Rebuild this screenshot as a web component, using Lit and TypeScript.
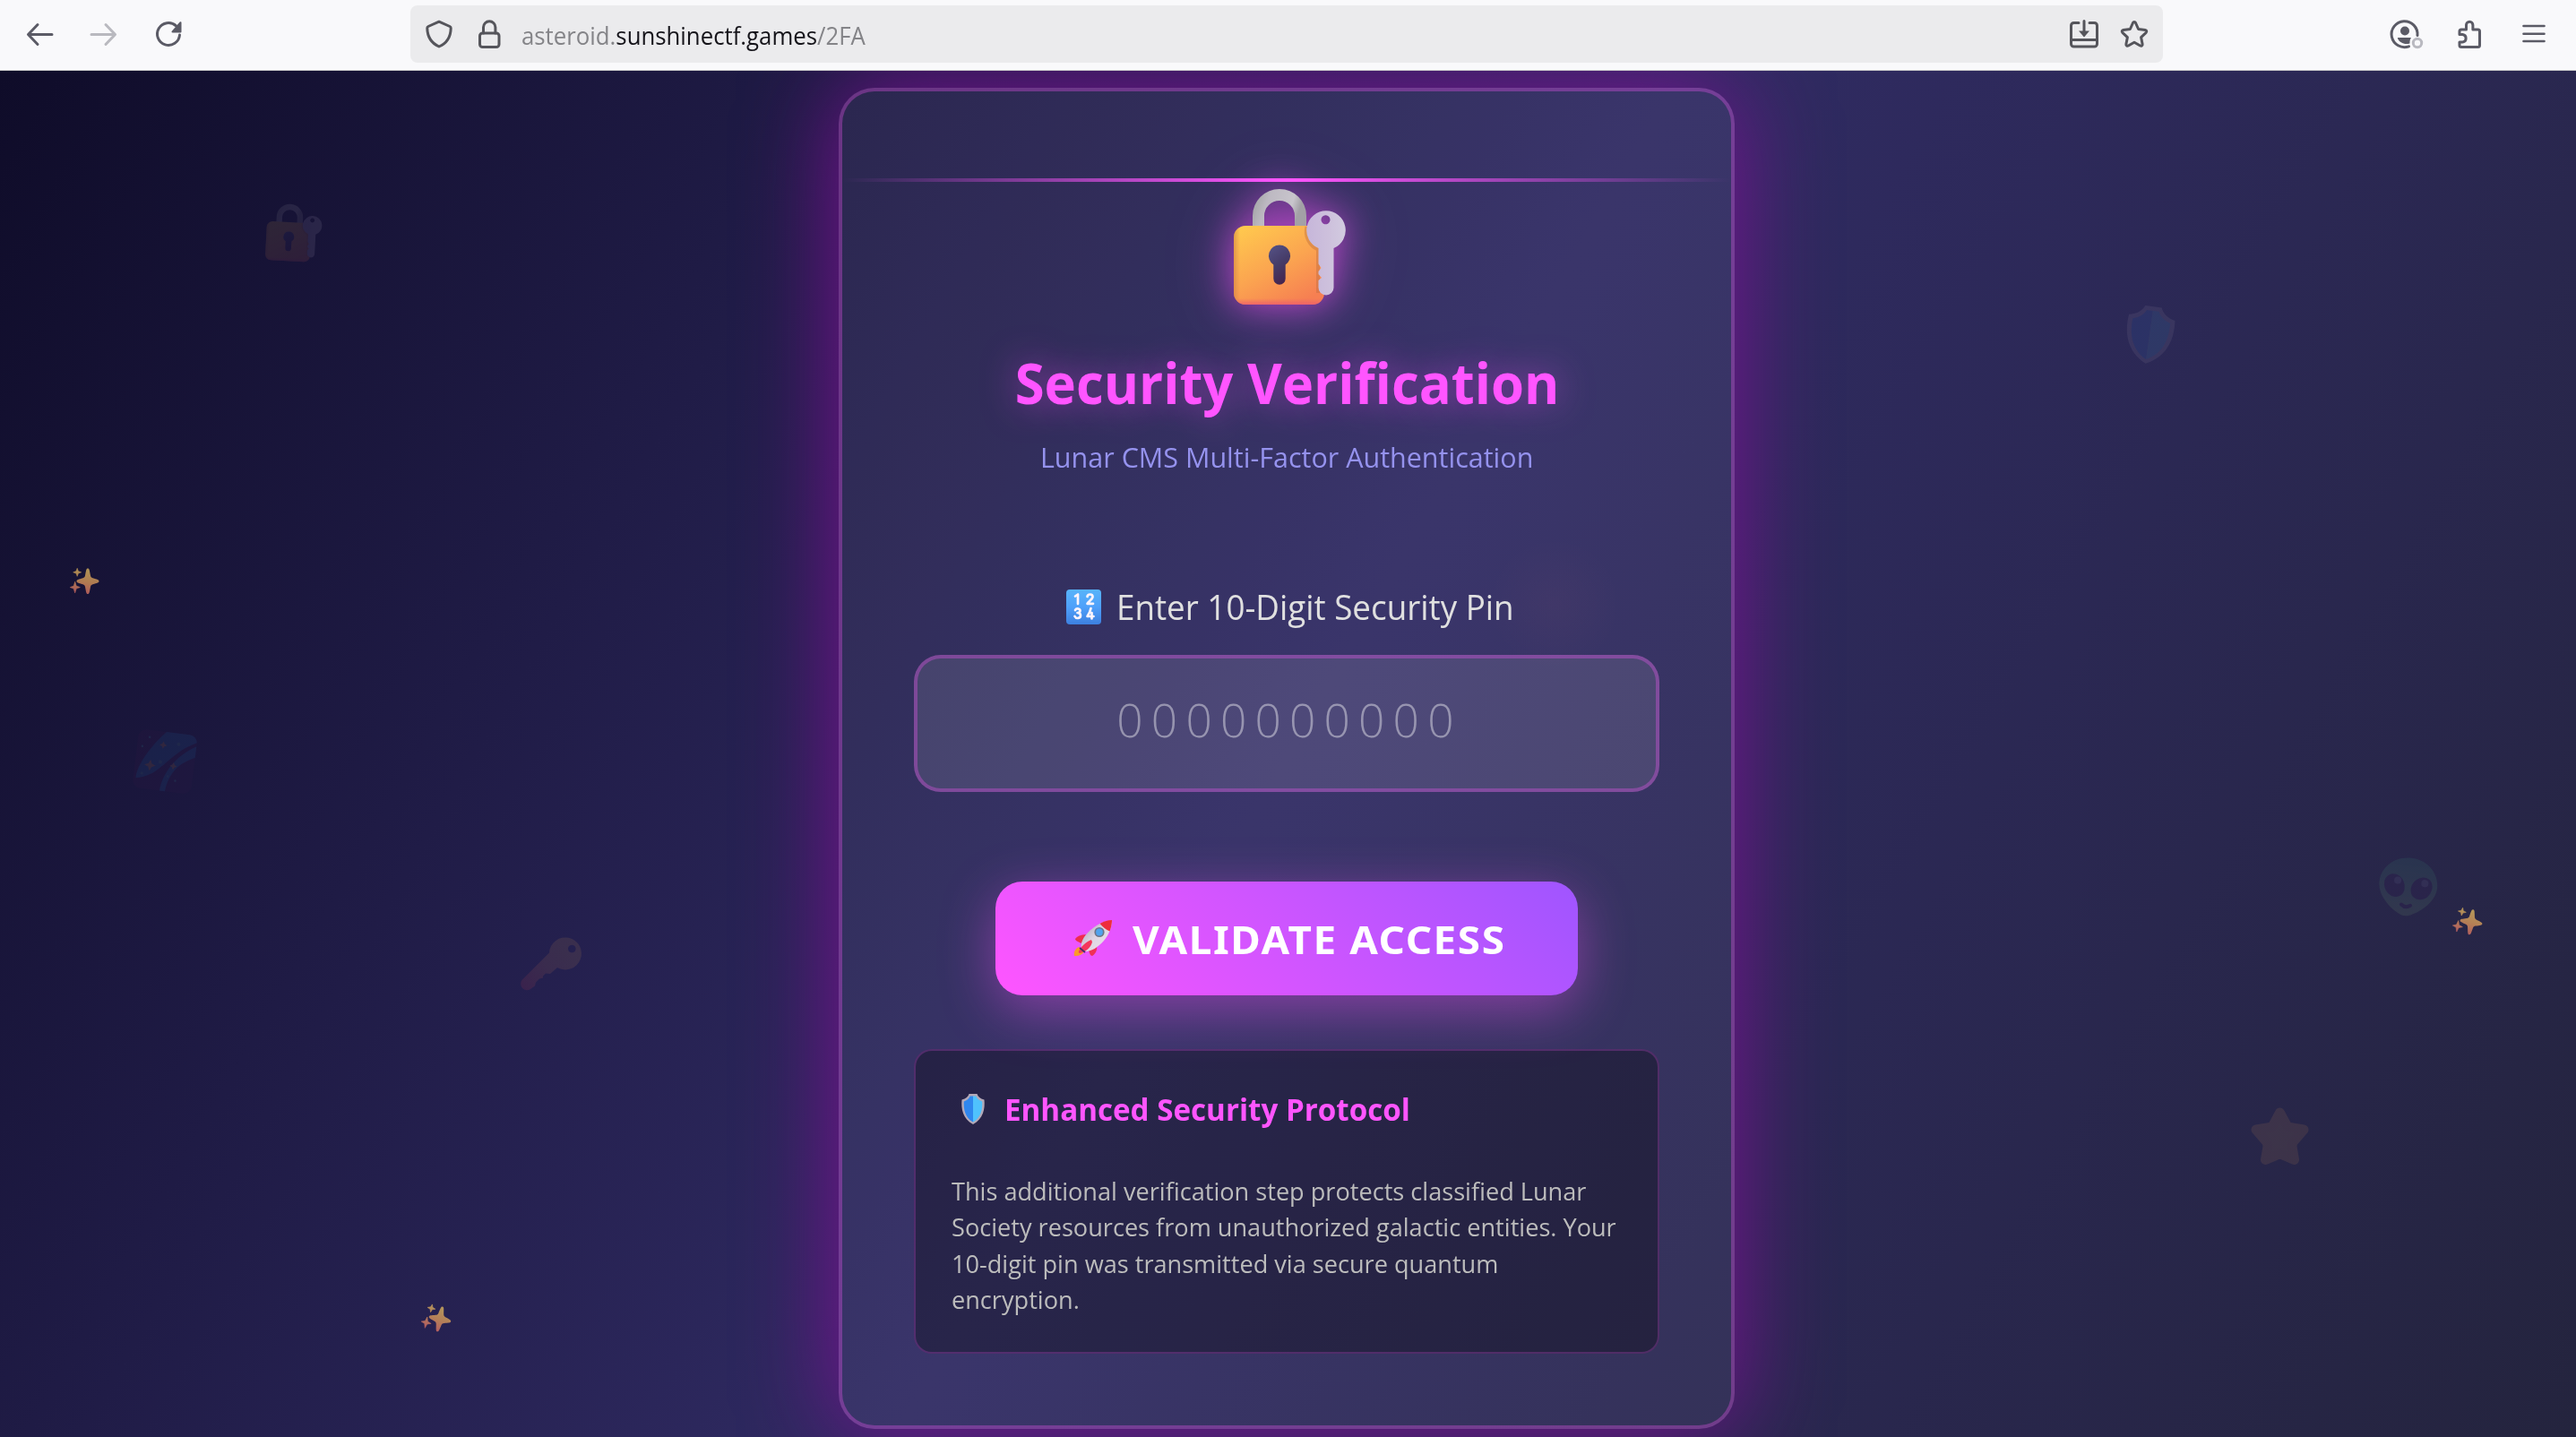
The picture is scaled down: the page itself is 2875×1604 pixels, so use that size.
import { LitElement, html, svg, css } from "lit";
import { customElement } from "lit/decorators.js";

const BODY_FONT = css`"Open Sans", "Noto Sans", "Liberation Sans", sans-serif`;

const lockWithKey = () => svg`
  <defs>
    <linearGradient id="lk-body" x1="0.1" y1="0" x2="0.7" y2="1">
      <stop offset="0" stop-color="#ffc94e" /><stop offset="0.55" stop-color="#fba450" /><stop offset="1" stop-color="#f67f52" />
    </linearGradient>
    <linearGradient id="lk-foot" x1="0" y1="0" x2="0" y2="1">
      <stop offset="0.92" stop-color="#f0606a" stop-opacity="0" /><stop offset="1" stop-color="#ea5a70" stop-opacity="0.8" />
    </linearGradient>
    <linearGradient id="lk-side" x1="0" y1="0" x2="1" y2="0">
      <stop offset="0" stop-color="#d08045" stop-opacity="0.6" /><stop offset="0.07" stop-color="#d08045" stop-opacity="0" />
    </linearGradient>
    <linearGradient id="lk-ring" x1="0" y1="0" x2="1" y2="0.3">
      <stop offset="0" stop-color="#a9a9ac" /><stop offset="0.25" stop-color="#bdb9c2" /><stop offset="0.8" stop-color="#c8c5cc" /><stop offset="1" stop-color="#a3a1a6" />
    </linearGradient>
    <linearGradient id="lk-hole" x1="0.2" y1="0" x2="0.6" y2="1">
      <stop offset="0" stop-color="#535084" /><stop offset="0.5" stop-color="#463c68" /><stop offset="1" stop-color="#46254e" />
    </linearGradient>
    <linearGradient id="lk-key" x1="0" y1="0" x2="1" y2="0">
      <stop offset="0" stop-color="#c6b6da" /><stop offset="0.55" stop-color="#cdc0dc" /><stop offset="1" stop-color="#d2cbe0" />
    </linearGradient>
  </defs>
  <path d="M38 50V30.5a23.5 23.5 0 0 1 47 0V50" transform="translate(.5 5.5)" fill="none" stroke="url(#lk-ring)" stroke-width="13" />
  <rect x="11" y="47" width="101" height="88" rx="13" fill="url(#lk-body)" />
  <rect x="11" y="47" width="101" height="88" rx="13" fill="url(#lk-side)" />
  <rect x="11" y="47" width="101" height="88" rx="13" fill="url(#lk-foot)" />
  <path d="M92.500 48a22 22 0 0 0 12.500 25.500V122" fill="none" stroke="#b8683c" stroke-opacity="0.4" stroke-width="4" />
  <path d="M62 68.500a12 12 0 0 1 6.700 22v15.500a6.700 6.700 0 0 1-13.400 0v-15.500a12 12 0 0 1 6.700-22z" fill="url(#lk-hole)" />
  <path fill-rule="evenodd" fill="url(#lk-key)" d="M114 30.300a21.700 21.700 0 0 1 8.500 41.700v44a8.500 8.500 0 0 1-17 0v-8l3.500-3-3.500-4v-3l3-4-3-4.500V72a21.700 21.700 0 0 1 8.500-41.700zM113.500 35.300a5 5 0 1 0 .01 0z" />`;

const shield = () => svg`
  <path d="M10.500 1h9c1 3 3.500 5.500 8 6.500 1 10-1 21.500-12.500 27.500C3.500 29 1.500 17.500 2.500 7.500 7 6.500 9.500 4 10.500 1z" fill="#b3a9b8" />
  <path d="M15 3.500h-3.300C10.500 6.500 8 8.500 4.800 9.500 4.300 18 6 27.500 15 32.500z" fill="#2f87ee" />
  <path d="M15 3.500h3.300c1.200 3 3.700 5 6.900 6 .5 8.500-1.200 18-10.200 23z" fill="#4fc2fd" />`;

const sparkles = () => svg`
  <defs><linearGradient id="sp" gradientUnits="userSpaceOnUse" x1="18" y1="2" x2="13" y2="28">
    <stop offset="0" stop-color="#ebc160" /><stop offset="0.5" stop-color="#eba45c" /><stop offset="1" stop-color="#e87568" />
  </linearGradient></defs>
  <g fill="url(#sp)">
    <path d="M20 .5c1.600 0 1.800 1.500 3 8 .3 1.500 1 2.200 2.500 2.700 5 1.500 7 1.900 7 3.500s-2 2-7 3.500c-1.500.5-2.200 1.200-2.500 2.700-1.200 6.500-1.400 8-3 8s-1.800-1.500-3-8c-.3-1.500-1-2.200-2.500-2.700-5-1.500-7-1.900-7-3.500s2-2 7-3.500c1.500-.5 2.200-1.200 2.500-2.700 1.200-6.500 1.400-8 3-8z" />
    <path d="M8.200.300l1.200 3.300 3.300 1.200-3.300 1.200-1.200 3.300-1.200-3.300-3.300-1.200 3.300-1.200z" stroke="url(#sp)" stroke-width=".6" />
    <path d="M5.700 15.300l1.500 4.800 4.200 1.500-4.200 1.500-1.500 4.800-1.500-4.800L.2 21.600l4-1.500z" stroke="url(#sp)" stroke-width=".6" />
  </g>`;

@customElement("browser-bar")
class BrowserBar extends LitElement {
  static styles = css`
    :host { display: block; position: relative; z-index: 2; }
    .bar { box-sizing: border-box; height: 79px; display: flex; align-items: flex-start; background: #f9f9fb;
      border-bottom: 1px solid #cccccc; padding: 6px 31px 0 28px; color: #5b5b66; }
    .group { display: flex; align-items: center; height: 64px; gap: 40px; }
    .address { box-sizing: border-box; width: 1956px; height: 64px; margin-left: 254px; padding: 0 16px; border-radius: 8px;
      background: #ebebed; display: flex; align-items: center; gap: 24px; color: #55555b; }
    .url { flex: 1; font: 400 27.400px/64px ${BODY_FONT}; padding-top: 4px; margin-left: -4px; color: #848488; white-space: nowrap; }
    .squeeze { display: inline-block; transform: scaleX(0.941); transform-origin: left; }
    .host { color: #15141a; }
    .right { margin-left: auto; }
    svg { display: block; width: 32px; height: 32px; overflow: visible; fill: none; stroke: currentColor; stroke-width: 3; stroke-linecap: round; stroke-linejoin: round; }
    .off { opacity: 0.4; }
    .solid { fill: currentColor; stroke: none; }
  `;
  render() {
    return html`<div class="bar">
      <div class="group">
        <svg viewBox="0 0 32 32"><path d="M30 16.500H4M14 5.500L3.500 16.500 14 27.500" /></svg>
        <svg class="off" viewBox="0 0 32 32"><path d="M2 16.500h26M18 5.500l10.500 11L18 27.500" /></svg>
        <svg viewBox="0 0 32 32"><path d="M28.500 17a12.500 12.500 0 1 1-4-10.200l2.500 2.500" /><path class="solid" d="M30.500 3v10.500a1 1 0 0 1-1 1H20.500c-1 0-1.300-1-.7-1.700L28.700 2.500c.7-.7 1.800-.3 1.800.5z" /></svg>
      </div>
      <div class="address">
        <svg viewBox="0 0 32 32"><path d="M16 2.200l12 5.300c.8.400 1.200 1 1.200 1.900C29 19 25 26 16 30 7 26 3 19 2.800 9.400c0-.9.400-1.500 1.200-1.900z" /></svg>
        <svg viewBox="0 0 32 32"><rect x="5.500" y="15" width="21.500" height="15.500" rx="3" /><path d="M9.500 15V8.500a6.700 6.700 0 0 1 13.400 0V15" /></svg>
        <div class="url"><span class="squeeze">asteroid.<span class="host">sunshinectf.games</span>/2FA</span></div>
        <svg viewBox="0 0 32 32"><path d="M10 3.500H4.500a3 3 0 0 0-3 3v20.500a3 3 0 0 0 3 3h23a3 3 0 0 0 3-3V6.500a3 3 0 0 0-3-3H22M2 22.500h28M16 1.500v13" /><path class="solid" d="M10 12.500h12L16 19.500z" /></svg>
        <svg viewBox="0 0 32 32"><path d="M16 2.500c.7 0 1.200.4 1.500 1l3.100 7 7.600.9c1.500.2 2 1.900 1 2.900l-5.600 5.300 1.500 7.600c.3 1.500-1.200 2.500-2.500 1.800L16 25.300 9.400 29c-1.300.7-2.800-.3-2.500-1.800l1.500-7.600-5.600-5.300c-1-1-.5-2.700 1-2.900l7.600-.9 3.100-7c.3-.6.8-1 1.500-1z" /></svg>
      </div>
      <div class="group right">
        <svg viewBox="0 0 32 32"><path d="M30 17.500A14.500 14.500 0 1 0 20.500 29.800" /><circle class="solid" cx="16" cy="12.500" r="5" /><path class="solid" d="M8.500 20h14.500c-1 1.500-1.700 3.500-1.500 6.500-6 1.800-11.500-1-13.500-5.500-.2-.6.100-1 .5-1z" /><circle cx="30" cy="26" r="4.700" stroke="#b9b9c0" /></svg>
        <svg viewBox="0 0 32 32"><path d="M5 16.500V13a2 2 0 0 1 2-2h5.500V6a3.700 3.700 0 0 1 7.400 0v5H25.500a2 2 0 0 1 2 2v15.500a2 2 0 0 1-2 2H7a2 2 0 0 1-2-2V25H8.500a4.300 4.300 0 0 0 0-8.500z" /></svg>
        <svg viewBox="0 0 32 32"><path d="M4.500 7h23M4.500 15.700h23M4.500 24h23" stroke-width="2.600" /></svg>
      </div>
    </div>`;
  }
}

@customElement("night-sky")
class NightSky extends LitElement {
  static styles = css`
    :host { position: absolute; inset: 0; display: block; }
    svg { position: absolute; display: block; overflow: visible; }
    .faint { opacity: 0.1; }
    .spark { width: 33px; height: 30px; opacity: 0.72; }
    .lock { left: 292px; top: 146px; width: 69px; height: 69px; transform: rotate(3deg); }
    .shield { left: 2370px; top: 261px; width: 58px; height: 68px; transform: rotate(8deg); }
    .galaxy { left: 151px; top: 738px; width: 66px; height: 66px; transform: rotate(7deg); }
    .key { left: 578px; top: 965px; width: 76px; height: 64px; }
    .alien { left: 2655px; top: 878px; width: 65px; height: 66px; transform: rotate(7deg); }
    .star { left: 2512px; top: 1157px; width: 65px; height: 66px; }
    .s1 { left: 78px; top: 555px; }
    .s2 { left: 471px; top: 1378px; transform: rotate(12deg); }
    .s3 { left: 2738px; top: 935px; transform: rotate(9deg); }
    .haze { position: absolute; left: 1660px; top: 520px; width: 150px; height: 150px; background: radial-gradient(circle, rgba(255, 120, 120, 0.035), transparent 70%); }
  `;
  render() {
    return html`
      <svg class="faint lock" viewBox="0 0 140 140">${lockWithKey()}</svg>
      <svg class="faint shield" viewBox="1 0 28 36" preserveAspectRatio="none">${shield()}</svg>
      <svg class="faint galaxy" viewBox="0 0 66 66">
        <rect width="66" height="66" rx="9" fill="#401848" />
        <path d="M31 0h26a9 9 0 0 1 9 8C50 16 42 26 32 37 22 48 14 53 3 55 2 40 18 14 31 0z" fill="#2080c8" />
        <path d="M66 12v13C50 32 39 44 37 66h-6C32 44 46 24 66 12z" fill="#2080c8" />
        <path d="M17 34l1.500 3.500L22 39l-3.500 1.500L17 44l-1.500-3.500L12 39l3.500-1.500zM29 12l1 2 2 1-2 1-1 2-1-2-2-1 2-1zM43 34l1 2 2 1-2 1-1 2-1-2-2-1 2-1z" fill="#f5b050" stroke="#f5b050" />
        <g fill="#50c0c0"><circle cx="46" cy="12" r="2" /><circle cx="28" cy="34" r="2" /><circle cx="9" cy="49" r="1.500" /><circle cx="38" cy="49" r="1.200" /><circle cx="47" cy="53" r="1.200" /><circle cx="6" cy="19" r="1.200" /><circle cx="13" cy="8" r="1.200" /></g>
      </svg>
      <svg class="key faint" viewBox="0 0 76 64">
        <defs><linearGradient id="ky" gradientUnits="userSpaceOnUse" x1="56" y1="16" x2="8" y2="60"><stop offset="0" stop-color="#ffb648" /><stop offset="0.450" stop-color="#ff9850" /><stop offset="1" stop-color="#ff4048" /></linearGradient></defs>
        <path fill-rule="evenodd" fill="url(#ky)" d="M35 19.500A18 18 0 1 1 44 36l-8 7-5-.5-3 3v2l-4 1-4 4-1 4-5 3.500a7 7 0 0 1-9.500-10zM60.300 10.700a4.300 4.300 0 1 0 .01 0z" />
      </svg>
      <svg class="faint alien" viewBox="0 0 64 64">
        <defs><linearGradient id="al" x1="0" y1="0" x2="0" y2="1"><stop offset="0" stop-color="#38b088" /><stop offset="1" stop-color="#90d080" /></linearGradient></defs>
        <path d="M32 0c18 0 32 13 32 30 0 13-12 25-23 31-6 4-12 4-18 0C12 55 0 43 0 30 0 13 14 0 32 0z" fill="url(#al)" />
        <g fill="#3c1a60"><ellipse cx="17" cy="32" rx="11" ry="13" transform="rotate(-32 17 32)" /><ellipse cx="47" cy="32" rx="11" ry="13" transform="rotate(32 47 32)" /></g>
        <circle cx="20" cy="26" r="4" fill="#9080c0" /><circle cx="50" cy="26" r="4" fill="#9080c0" />
        <path d="M27 52q5 4 10 0" fill="none" stroke="#3c1a60" stroke-width="4" stroke-linecap="round" />
      </svg>
      <svg class="faint star" viewBox="0 0 65 66"><path d="M32.500 6l8 15 3 1.500 15.500 2.500L46.500 39.500 46 44l2.500 14.500-14-6h-4l-14 6L19 44l-.5-4.500L6 25l15.500-2.500 3-1.500z" fill="#f2b055" stroke="#f2a858" stroke-width="11" stroke-linejoin="round" /></svg>
      <svg class="spark s1" viewBox="0 0 33 30">${sparkles()}</svg>
      <svg class="spark s2" viewBox="0 0 33 30">${sparkles()}</svg>
      <svg class="spark s3" viewBox="0 0 33 30">${sparkles()}</svg>
      <div class="haze"></div>`;
  }
}

@customElement("verify-card")
class VerifyCard extends LitElement {
  static styles = css`
    :host { display: block; position: relative; font-family: ${BODY_FONT}; }
    .card { box-sizing: border-box; position: relative; width: 1000px; height: 1497px; padding: 103px 80px 0; border: 4px solid rgba(255, 85, 255, 0.3);
      border-radius: 40px; background: rgba(255, 255, 255, 0.05); background-clip: border-box; box-shadow: 0 0 104px rgba(128, 16, 150, 0.95);
      display: flex; flex-direction: column; align-items: center; }
    .scan { position: absolute; left: 0; right: 0; top: 97px; height: 4px; background: linear-gradient(90deg, transparent, #ff55ff, transparent); }
    svg { display: block; overflow: visible; flex: none; }
    .badge { width: 140px; height: 140px; filter: drop-shadow(0 0 20px rgba(255, 85, 255, 0.6)) drop-shadow(0 0 34px rgba(255, 85, 255, 0.2)); }
    h1, h2, p { margin: 0; white-space: nowrap; }
    h1 { margin-top: 42.400px; font-size: 62.700px; line-height: 80px; font-weight: 700; color: #ff55ff; transform: scaleX(0.954); text-shadow: 0 0 40px rgba(255, 85, 255, 0.5); }
    .sub { margin-top: 20.900px; font-size: 31.400px; line-height: 44px; color: #9592ee; transform: scaleX(0.972); }
    .label { margin-top: 119.500px; height: 52px; padding-left: 6px; display: flex; align-items: center; gap: 17px; font-size: 37.600px; line-height: 52px; color: #e0e0e0; }
    .label svg { width: 39px; height: 39px; }
    .label span { display: block; width: 443px; white-space: nowrap; transform: scaleX(0.979); transform-origin: left; }
    .pin { box-sizing: border-box; width: 832px; height: 153px; margin-top: 27.200px; padding: 0 0 8px; border: 4px solid rgba(255, 85, 255, 0.3); border-radius: 30px; background: rgba(255, 255, 255, 0.1);
      color: #fff; text-align: center; font: 300 51.400px ${BODY_FONT}; letter-spacing: 9.200px; outline: 0; text-indent: 6px; }
    .pin::placeholder { color: rgba(255, 255, 255, 0.42); opacity: 1; }
    .go { box-sizing: border-box; width: 650px; height: 127px; margin-top: 100px; padding: 0 0 0 87px; border: 0; border-radius: 30px; background: linear-gradient(45deg, #ff55ff, #9f55ff);
      box-shadow: 0 16px 60px rgba(255, 85, 255, 0.4); display: flex; align-items: center; gap: 22px; color: #fff; font: 700 43px/127px "Noto Sans", "Open Sans", sans-serif; letter-spacing: 1.500px; }
    .go svg { width: 44px; height: 42px; }
    .go span { padding-top: 2px; white-space: nowrap; transform: scaleX(1.064); transform-origin: left; }
    .note { box-sizing: border-box; width: 832px; height: 340px; margin-top: 60px; padding: 41px 40px 0; border: 2px solid rgba(255, 85, 255, 0.2); border-radius: 20px; background: rgba(0, 0, 0, 0.3); }
    .note h2 { display: flex; align-items: center; gap: 20px; padding-left: 9px; font-size: 34.500px; line-height: 48px; color: #ff55ff; }
    .note h2 svg { width: 30px; height: 36px; }
    .note h2 span { transform: scaleX(0.961); transform-origin: left; }
    .note p { margin-top: 47px; font-size: 28.200px; line-height: 40.300px; color: #bcbcbc; transform: scaleX(0.9625); transform-origin: left; }
  `;
  render() {
    return html`<section class="card">
      <svg class="badge" viewBox="0 0 140 140">${lockWithKey()}</svg>
      <h1>Security Verification</h1>
      <p class="sub">Lunar CMS Multi-Factor Authentication</p>
      <label class="label">
        <svg viewBox="0 0 39 39">
          <defs><linearGradient id="nb" x1="0" y1="0" x2="0" y2="1"><stop offset="0" stop-color="#58b4fa" /><stop offset="0.500" stop-color="#4fa0fa" /><stop offset="1" stop-color="#3d80e0" /></linearGradient></defs>
          <rect width="39" height="39" rx="4" fill="url(#nb)" />
          <g fill="none" stroke="#fff4fc" stroke-width="2.700" stroke-linecap="round" stroke-linejoin="round">
            <path d="M10 7.500l3-2V16" /><path d="M23.500 8c.5-3.500 6.500-3.300 6 .5-.3 2.500-4.500 4.500-6 7.300h6.500" />
            <path d="M10 23c1.500-2.500 6-1.700 5.500 1-.3 1.500-1.500 2-3 2 2 0 3.500.7 3.500 3 0 3.500-5 4-6.500 1" /><path d="M27.500 21c-.5 3-2 6-4 9h7M28.500 26v6.500" />
          </g>
        </svg>
        <span>Enter 10-Digit Security Pin</span>
      </label>
      <input class="pin" maxlength="10" placeholder="0000000000" />
      <button class="go">
        <svg viewBox="0 0 44 42">
          <defs><linearGradient id="rk" x1="0" y1="0" x2="1" y2="1"><stop offset="0.200" stop-color="#b9b2c6" /><stop offset="0.500" stop-color="#ded5e2" /><stop offset="1" stop-color="#f0e4ee" /></linearGradient></defs>
          <path d="M6 31C2 33 0 37 1 41c4.500.5 9-1 11-5z" fill="#fb9a28" />
          <path d="M14 17C8 17.500 4 19 2 22c0 2 3 3 7 5z" fill="#ee2c4e" /><path d="M26 30c1 5-2 9-5 11-2 0-3-3-4-6z" fill="#f03058" />
          <path d="M43 1C32 2 20 9 12 20c-3 5-4 9-3 12l5 4c6 0 14-5 20-12 6-7 9-16 9-23z" fill="url(#rk)" />
          <path d="M43 1c-5 0-10 2-13.500 4 3 3.500 7 7 11 8.500C42.500 8 43 4 43 1z" fill="#ee2d3c" />
          <circle cx="29" cy="14.500" r="5.600" fill="#6d7488" /><circle cx="29" cy="14.500" r="3.900" fill="#4fa3ee" />
          <path d="M20 23c-6 2-12 8-14 13-1 1.500 1 2.500 3 1.500 6-2 11-7 12-12z" fill="#f4365c" /><path d="M7 32l6 5" stroke="#45326c" stroke-width="1.800" />
        </svg>
        <span>VALIDATE ACCESS</span>
      </button>
      <div class="note">
        <h2><svg viewBox="0 0 30 36">${shield()}</svg><span>Enhanced Security Protocol</span></h2>
        <p>This additional verification step protects classified Lunar<br />Society resources from unauthorized galactic entities. Your<br />10-digit pin was transmitted via secure quantum<br />encryption.</p>
      </div>
      <div class="scan"></div>
    </section>`;
  }
}

@customElement("app-root")
class AppRoot extends LitElement {
  static styles = css`
    :host { display: block; width: 2875px; height: 1604px; overflow: hidden; }
    .page { position: relative; height: 1525px; display: flex; justify-content: center; align-items: flex-start; overflow: hidden;
      background: linear-gradient(120deg, #0f0c29, #302b63, #24243e); }
    .center { margin: 19px 3px 0 0; }
  `;
  render() {
    return html`<browser-bar></browser-bar>
      <main class="page"><night-sky></night-sky><verify-card class="center"></verify-card></main>`;
  }
}
